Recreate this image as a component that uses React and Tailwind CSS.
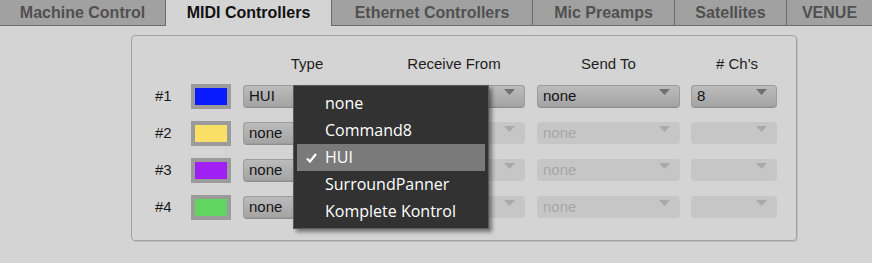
const tabs = [
  { label: 'Machine Control', w: 'w-[166px]' },
  { label: 'MIDI Controllers', w: 'w-[166px]', active: true },
  { label: 'Ethernet Controllers', w: 'w-[201px]' },
  { label: 'Mic Preamps', w: 'w-[142px]' },
  { label: 'Satellites', w: 'w-[112px]' },
  { label: 'VENUE', w: 'flex-1' },
]

const rows = [
  { n: '#1', color: 'bg-[#0a1aff]', type: 'HUI', send: 'none', ch: '8', enabled: true },
  { n: '#2', color: 'bg-[#fadf66]', type: 'none', send: 'none', ch: '' },
  { n: '#3', color: 'bg-[#a020f4]', type: 'none', send: 'none', ch: '' },
  { n: '#4', color: 'bg-[#62d460]', type: 'none', send: 'none', ch: '' },
]

const menuItems = ['none', 'Command8', 'HUI', 'SurroundPanner', 'Komplete Kontrol']

function Arrow({ enabled }) {
  return (
    <svg width="11" height="6" viewBox="0 0 11 6" className="absolute right-[10px] top-[4px]">
      <path d="M0 0H11L5.5 6Z" fill={enabled ? '#6f6f6f' : '#a9a9a9'} />
    </svg>
  )
}

function Select({ value, enabled, w }) {
  return (
    <div
      className={`relative h-[22px] ${w} rounded-[4px] pl-[6px] text-[15px] leading-[22px] ${
        enabled
          ? 'bg-gradient-to-b from-[#bdbdbd] to-[#a3a3a3] text-[#141414] shadow-[inset_0_0_0_1px_#9c9c9c,0_1px_0_#8e8e8e]'
          : 'bg-[#c6c6c6] text-[#a6a6a6]'
      }`}
    >
      {value}
      <Arrow enabled={enabled} />
    </div>
  )
}

export default function App() {
  return (
    <div className="w-[872px] h-[263px] bg-[#d4d4d4] overflow-hidden font-['Liberation_Sans',Arial,sans-serif]">
      <div className="flex h-[26px]">
        {tabs.map((t) => (
          <div
            key={t.label}
            className={`${t.w} flex items-center justify-center text-[16px] font-bold ${
              t.active
                ? 'bg-[#d4d4d4] text-[#111] border-r border-[#6c6c6c]'
                : 'bg-[#a1a1a1] text-[#505050] border-r border-b border-[#6c6c6c] last:border-r-0'
            }`}
          >
            {t.label}
          </div>
        ))}
      </div>

      <div className="pl-[131px] pt-[9px]">
        <div className="relative w-[666px] h-[206px] border border-[#a2a2a2] rounded-[4px] shadow-[1px_1px_0_#bdbdbd]">
          <div className="flex h-[15px] mt-[20px] text-[15px] leading-[15px] text-[#1e1e1e]">
            <div className="w-[111px]" />
            <div className="w-[128px] text-center">Type</div>
            <div className="w-[12px]" />
            <div className="w-[142px] text-center">Receive From</div>
            <div className="w-[12px]" />
            <div className="w-[143px] text-center">Send To</div>
            <div className="w-[14px]" />
            <div className="w-[86px] text-center"># Ch's</div>
          </div>

          <div className="mt-[14px] flex flex-col gap-[15px]">
            {rows.map((r) => (
              <div key={r.n} className="flex items-center h-[22px]">
                <div className="w-[59px] pl-[23px] text-[15px] text-[#1a1a1a]">{r.n}</div>
                <div className="w-[40px] h-[25px] bg-[#9b9b9b] p-[4px]">
                  <div className={`w-full h-full ${r.color}`} />
                </div>
                <div className="w-[12px]" />
                <Select value={r.type} enabled w="w-[128px]" />
                <div className="w-[12px]" />
                <Select value="" enabled={r.enabled} w="w-[142px]" />
                <div className="w-[12px]" />
                <Select value={r.send} enabled={r.enabled} w="w-[143px]" />
                <div className="w-[11px]" />
                <Select value={r.ch} enabled={r.enabled} w="w-[86px]" />
              </div>
            ))}
          </div>

          <div className="absolute left-[161px] top-[49px] w-[196px] h-[144px] bg-[#323232] border border-[#5a5a5a] shadow-[3px_3px_4px_rgba(0,0,0,0.45)] pt-[4px] px-[3px] font-['Open_Sans',sans-serif] text-[16px] text-white">
            {menuItems.map((m) => (
              <div
                key={m}
                className={`relative h-[27px] leading-[27px] pl-[28px] ${m === 'HUI' ? 'bg-[#7a7a7a]' : ''}`}
              >
                {m === 'HUI' && (
                  <svg width="11" height="10" viewBox="0 0 11 10" className="absolute left-[9px] top-[9px]">
                    <path d="M1 5.5L4 8.5L10 1" stroke="#fff" strokeWidth="2.2" fill="none" />
                  </svg>
                )}
                {m}
              </div>
            ))}
          </div>
        </div>
      </div>
    </div>
  )
}
